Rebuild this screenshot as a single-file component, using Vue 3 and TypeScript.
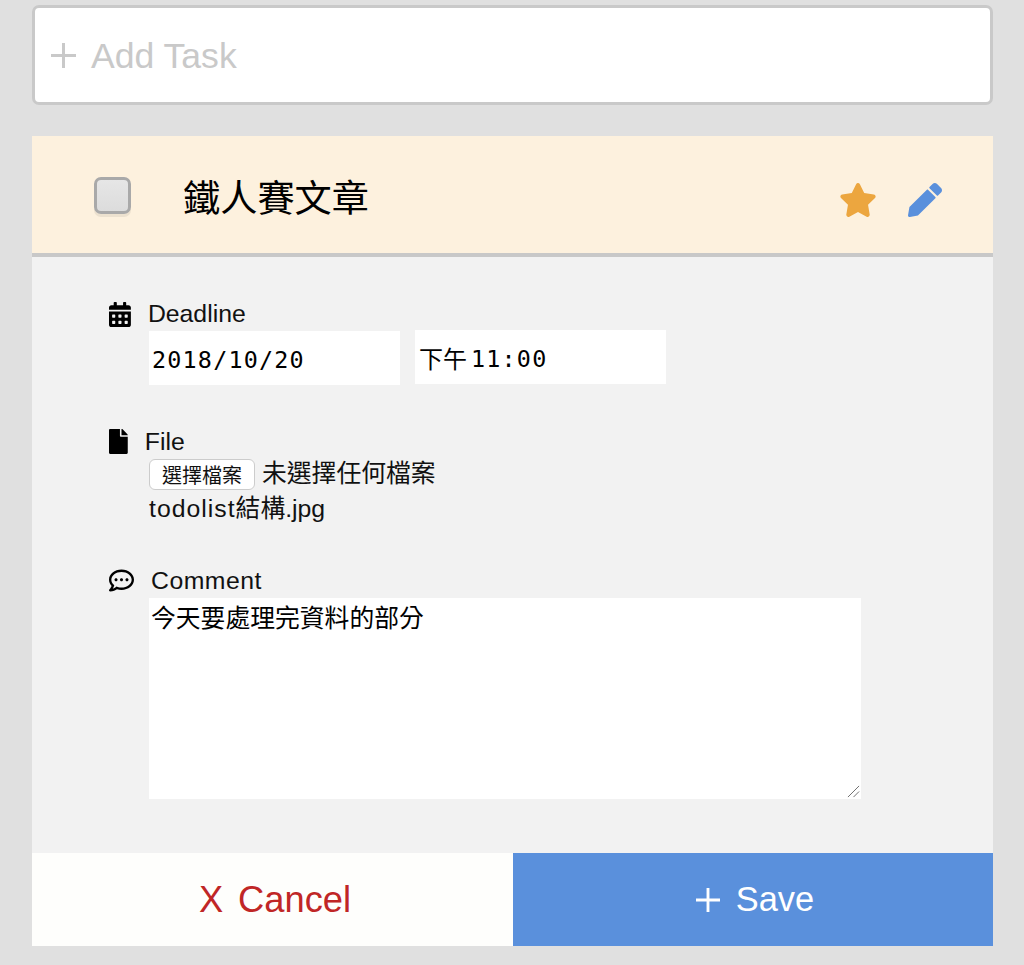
<script setup lang="ts">
const starPath = "M259.3 17.8L194 150.2 47.9 171.5c-26.2 3.8-36.7 36.1-17.7 54.6l105.7 103-25 145.5c-4.5 26.3 23.2 46 46.4 33.7L288 439.6l130.7 68.7c23.2 12.2 50.9-7.4 46.4-33.7l-25-145.5 105.7-103c19-18.5 8.5-50.8-17.7-54.6L382 150.2 316.7 17.8c-11.7-23.6-45.6-23.9-57.4 0z";
const pencilPath = "M497.9 142.1l-46.1 46.1c-4.7 4.7-12.3 4.7-17 0l-111-111c-4.7-4.7-4.7-12.3 0-17l46.1-46.1c18.7-18.7 49.1-18.7 67.9 0l60.1 60.1c18.8 18.7 18.8 49.1 0 67.9zM284.2 99.8L21.6 362.4.4 483.9c-2.9 16.4 11.4 30.6 27.8 27.8l121.5-21.3 262.6-262.6c4.7-4.7 4.7-12.3 0-17l-111-111c-4.8-4.7-12.4-4.7-17.1 0z";
const calendarPath = "M0 464c0 26.5 21.5 48 48 48h352c26.5 0 48-21.5 48-48V192H0v272zm320-196c0-6.6 5.4-12 12-12h40c6.6 0 12 5.4 12 12v40c0 6.6-5.4 12-12 12h-40c-6.6 0-12-5.4-12-12v-40zm0 128c0-6.6 5.4-12 12-12h40c6.6 0 12 5.4 12 12v40c0 6.6-5.4 12-12 12h-40c-6.6 0-12-5.4-12-12v-40zM192 268c0-6.6 5.4-12 12-12h40c6.6 0 12 5.4 12 12v40c0 6.6-5.4 12-12 12h-40c-6.6 0-12-5.4-12-12v-40zm0 128c0-6.6 5.4-12 12-12h40c6.6 0 12 5.4 12 12v40c0 6.6-5.4 12-12 12h-40c-6.6 0-12-5.4-12-12v-40zM64 268c0-6.6 5.4-12 12-12h40c6.6 0 12 5.4 12 12v40c0 6.6-5.4 12-12 12H76c-6.6 0-12-5.4-12-12v-40zm0 128c0-6.6 5.4-12 12-12h40c6.6 0 12 5.4 12 12v40c0 6.6-5.4 12-12 12H76c-6.6 0-12-5.4-12-12v-40zM400 64h-48V16c0-8.8-7.2-16-16-16h-32c-8.8 0-16 7.2-16 16v48H160V16c0-8.8-7.2-16-16-16h-32c-8.8 0-16 7.2-16 16v48H48C21.5 64 0 85.5 0 112v48h448v-48c0-26.5-21.5-48-48-48z";
const filePath = "M224 136V0H24C10.7 0 0 10.7 0 24v464c0 13.3 10.7 24 24 24h336c13.3 0 24-10.7 24-24V160H248c-13.2 0-24-10.8-24-24zm160-14.1v6.1H256V0h6.1c6.4 0 12.5 2.5 17 7l97.9 98c4.5 4.5 7 10.6 7 16.9z";
const commentPath = "M144 208c-17.7 0-32 14.3-32 32s14.3 32 32 32 32-14.3 32-32-14.3-32-32-32zm112 0c-17.7 0-32 14.3-32 32s14.3 32 32 32 32-14.3 32-32-14.3-32-32-32zm112 0c-17.7 0-32 14.3-32 32s14.3 32 32 32 32-14.3 32-32-14.3-32-32-32zM256 32C114.6 32 0 125.1 0 240c0 47.6 19.9 91.2 52.9 126.3C38 405.7 7 439.1 6.5 439.5c-6.6 7-8.4 17.2-4.6 26S14.4 480 24 480c61.5 0 110-25.7 139.1-46.3C192 442.8 223.2 448 256 448c141.4 0 256-93.1 256-208S397.4 32 256 32zm0 368c-26.7 0-53.1-4.1-78.4-12.1l-22.7-7.2-19.5 13.8c-14.3 10.1-33.9 21.4-57.5 29 7.3-12.1 14.4-25.7 19.9-40.2l10.6-28.1-20.6-21.8C69.7 314.1 48 282.2 48 240c0-88.2 93.3-160 208-160s208 71.8 208 160-93.3 160-208 160z";
</script>

<template>
  <div class="page">
    <div class="add-bar">
      <svg class="plus plus-add" viewBox="0 0 25 25"><path d="M12.5 0v25M0 12.5h25" /></svg>
      <span class="add-text">Add Task</span>
    </div>

    <section class="card">
      <header class="card-head">
        <span class="checkbox"></span>
        <h1 class="title">鐵人賽文章</h1>
        <svg class="star" viewBox="0 0 576 512"><path :d="starPath" /></svg>
        <svg class="pencil" viewBox="0 0 512 512"><path :d="pencilPath" /></svg>
      </header>

      <div class="card-body">
        <div class="label">
          <svg class="icon" viewBox="0 0 448 512"><path :d="calendarPath" /></svg>
          <span class="deadline-label">Deadline</span>
        </div>
        <div class="field date-row">
          <div class="input date">2018/10/20</div>
          <div class="input time"><span class="cjk">下午</span>11:00</div>
        </div>

        <div class="label next">
          <svg class="icon" viewBox="0 0 384 512"><path :d="filePath" /></svg>
          <span class="file-label">File</span>
        </div>
        <div class="field file-row">
          <span class="file-btn">選擇檔案</span>
          <span class="file-status">未選擇任何檔案</span>
        </div>
        <div class="field filename"><span class="tracked">todolist</span>結構.jpg</div>

        <div class="label next">
          <svg class="icon" viewBox="0 0 512 512"><path :d="commentPath" /></svg>
          <span class="comment-label">Comment</span>
        </div>
        <div class="field comment">
          今天要處理完資料的部分
          <svg class="grip" viewBox="0 0 14 14"><path d="M1 13L13 1M7 13l6-6" /></svg>
        </div>
      </div>

      <footer class="actions">
        <div class="action cancel"><span>X</span><span>Cancel</span></div>
        <div class="action save">
          <svg class="plus plus-save" viewBox="0 0 25 25"><path d="M12.5 0v25M0 12.5h25" /></svg>
          <span>Save</span>
        </div>
      </footer>
    </section>
  </div>
</template>

<style>
html, body { margin: 0; background: #e0e0e0; }
</style>

<style scoped>
.page {
  box-sizing: border-box;
  width: 1024px;
  height: 965px;
  padding: 5px 31px 0 32px;
  background: #e0e0e0;
  font-family: "Liberation Sans", "Noto Sans CJK TC", sans-serif;
  color: #111;
  overflow: hidden;
}
.add-bar {
  box-sizing: border-box;
  height: 100px;
  display: flex;
  align-items: center;
  gap: 15px;
  padding-left: 16px;
  background: #fff;
  border: 3px solid #c9c9c9;
  border-radius: 7px;
  color: #c9c9c9;
  font-size: 35.6px;
}
.add-text { padding-top: 2px; }
.plus { fill: none; stroke: currentColor; stroke-width: 3; flex: none; }
.plus-add { width: 25px; height: 25px; }
.plus-save { width: 24px; height: 24px; }
.card { margin-top: 31px; }
.card-head {
  box-sizing: border-box;
  height: 121px;
  display: flex;
  align-items: center;
  padding: 0 51px 0 62px;
  background: #fdf1de;
  border-bottom: 4px solid #c8c8c8;
}
.checkbox {
  box-sizing: border-box;
  width: 37px;
  height: 37px;
  flex: none;
  margin-top: 2px;
  border: 3px solid #a9a9a9;
  border-radius: 7px;
  background: linear-gradient(#e6e6e6, #dcdcdc);
  box-shadow: 0 3px 0 #ece1cf;
}
.title {
  flex: 1;
  margin: 2px 0 0 52px;
  font-size: 37.2px;
  font-weight: 400;
  color: #000;
}
.star { width: 38px; height: 34px; fill: #eca63f; margin: 10px 31px 0 0; flex: none; }
.pencil { width: 34px; height: 34px; fill: #5a90dc; margin-top: 10px; flex: none; }
.card-body {
  height: 596px;
  box-sizing: border-box;
  padding: 43px 0 0 77px;
  background: #f2f2f2;
  font-size: 24.8px;
}
.label {
  height: 30px;
  display: flex;
  align-items: center;
  gap: 17px;
  color: #111;
}
.label.next { margin-top: 42px; }
.deadline-label { padding-bottom: 2px; }
.comment-label { letter-spacing: 0.5px; }
.icon { height: 25px; width: auto; flex: none; fill: #000; margin-top: -2px; }
.field { margin-left: 40px; }
.date-row { display: flex; gap: 15px; align-items: flex-start; }
.input {
  box-sizing: border-box;
  width: 251px;
  height: 54px;
  display: flex;
  align-items: center;
  padding: 4px 0 0 3px;
  background: #fff;
  color: #000;
  font-family: "DejaVu Sans Mono", "Noto Sans CJK TC", monospace;
  font-size: 23.4px;
  letter-spacing: 1.2px;
}
.date { margin-top: 1px; }
.time { padding-left: 4px; }
.cjk {
  font-size: 24px;
  letter-spacing: 0;
  margin: -4px 4px 0 0;
  font-family: "Noto Sans CJK TC", sans-serif;
}
.file-row {
  margin-top: 2px;
  height: 31px;
  display: flex;
  align-items: center;
  gap: 7px;
}
.file-status { margin-bottom: 8px; }
.file-btn {
  box-sizing: border-box;
  width: 106px;
  height: 31px;
  display: flex;
  align-items: center;
  justify-content: center;
  background: #fff;
  border: 1px solid #ccc;
  border-radius: 6px;
  font-size: 20px;
  color: #111;
}
.filename { height: 30px; line-height: 30px; margin-top: 4px; }
.tracked { letter-spacing: 1px; }
.comment {
  position: relative;
  box-sizing: border-box;
  margin-top: 2px;
  width: 712px;
  height: 201px;
  padding: 4px 2px;
  background: #fff;
  color: #000;
  line-height: 34px;
}
.grip {
  position: absolute;
  right: 1px;
  bottom: 1px;
  width: 13px;
  height: 13px;
  fill: none;
  stroke: #666;
  stroke-width: 1;
}
.actions { display: flex; height: 93px; }
.action {
  display: flex;
  align-items: center;
  justify-content: center;
  font-size: 36.3px;
}
.cancel { width: 481px; padding-left: 5px; box-sizing: border-box; gap: 15px; background: #fefefc; color: #c02626; }
.save { flex: 1; padding-left: 4px; background: #5a90dc; color: #fff; gap: 16px; font-size: 34.4px; }
</style>
